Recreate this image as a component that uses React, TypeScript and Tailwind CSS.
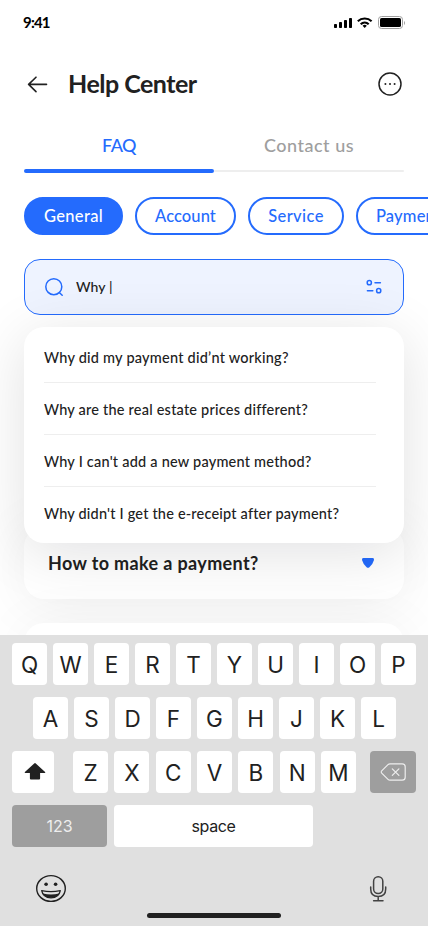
import React from 'react';

const lato = "font-['Lato','Noto_Sans',sans-serif]";

function Key({ label }: { label: string }) {
  return (
    <div className="flex h-[42px] w-[35px] items-center justify-center rounded-[4px] bg-white pt-[3px] text-[22.5px] leading-none text-[#212121]">
      {label}
    </div>
  );
}

function StatusBar() {
  return (
    <div className="flex h-11 items-center justify-between pl-[23px] pr-[23px]">
      <span className="text-[15px] font-bold leading-5 tracking-[-0.8px] text-black">9:41</span>
      <svg width="72" height="14" viewBox="333 16 72 14" className="translate-y-px">
        <rect x="334" y="24" width="3" height="4" rx="0.8" />
        <rect x="339" y="22" width="3" height="6" rx="0.8" />
        <rect x="344" y="20" width="3" height="8" rx="0.8" />
        <rect x="349" y="18" width="3" height="10" rx="0.8" />
        <g fill="none" stroke="#000" strokeWidth="2.1">
          <path d="M357.8 21.2a10 10 0 0 1 13.8 0" />
          <path d="M360.7 24.2a5.8 5.8 0 0 1 8 0" />
        </g>
        <path d="M362.6 25.8a3 3 0 0 1 4.2 0L364.7 28z" />
        <rect x="378.5" y="16.5" width="24" height="12" rx="3" fill="none" stroke="#a0a0a0" />
        <rect x="380" y="18" width="21" height="9" rx="1.6" />
        <path d="M404 21v4q1-.6 1-2t-1-2z" fill="#a0a0a0" />
      </svg>
    </div>
  );
}

function Header() {
  return (
    <div className="flex h-20 items-center px-6 text-[#212121]">
      <svg width="28" height="28" viewBox="24 70 28 28" fill="none" stroke="#212121" strokeWidth="1.6" strokeLinecap="round" strokeLinejoin="round">
        <path d="M46.5 84.4H28.6M36 77.2l-7.4 7.2 7.4 7.2" />
      </svg>
      <h1 className="ml-4 flex-1 whitespace-nowrap pb-[2px] text-[25px] font-bold leading-8 tracking-[-0.5px]">Help Center</h1>
      <svg width="28" height="28" viewBox="376 70 28 28" fill="none" stroke="#212121" strokeWidth="1.5">
        <circle cx="390" cy="84" r="11" />
        <path d="M385.4 84h.01M390 84h.01M394.6 84h.01" strokeWidth="2" strokeLinecap="round" />
      </svg>
    </div>
  );
}

function Tabs() {
  return (
    <div className="mx-6 mt-[10px] flex h-[39px] text-center text-[18px] font-medium leading-5">
      <div className="flex flex-1 flex-col justify-between">
        <span className="pt-px tracking-[-0.5px] text-[#246bfd]">FAQ</span>
        <div className="h-1 rounded-full bg-[#246bfd]" />
      </div>
      <div className="flex flex-1 flex-col justify-between">
        <span className="pt-px tracking-[0.5px] text-[#9e9e9e]">Contact us</span>
        <div className="mb-px h-[2px] rounded-full bg-[#eeeeee]" />
      </div>
    </div>
  );
}

function Chips() {
  const chip = 'flex shrink-0 items-center justify-center rounded-full border-2 border-[#246bfd] pt-px text-[16.5px] font-medium';
  return (
    <div className="mt-6 flex h-[38px] gap-3 overflow-hidden pl-6">
      <div className={chip + ' w-[99px] bg-[#246bfd] text-white tracking-[0.35px]'}>General</div>
      <div className={chip + ' w-[101px] text-[#246bfd] tracking-[0.1px]'}>Account</div>
      <div className={chip + ' w-[96px] text-[#246bfd] tracking-[0.4px]'}>Service</div>
      <div className={chip + ' w-[105px] text-[#246bfd] tracking-[0.2px]'}>Payment</div>
    </div>
  );
}

const suggestions = [
  { text: 'Why did my payment did’nt working?', spacing: 'tracking-[0.23px]' },
  { text: 'Why are the real estate prices different?', spacing: 'tracking-[0.21px]' },
  { text: "Why I can't add a new payment method?", spacing: 'tracking-[0.22px]' },
  { text: "Why didn't I get the e-receipt after payment?", spacing: 'tracking-[0.19px]' },
];

function Search() {
  return (
    <div className="relative mx-6 mt-6">
      <div className="flex h-14 items-center rounded-2xl border border-[#246bfd] bg-[#eef3ff] px-[19px]">
        <svg width="20" height="20" viewBox="44 277 20 20" fill="none" stroke="#246bfd" strokeWidth="1.5" strokeLinecap="round">
          <circle cx="53.8" cy="286.7" r="8" />
          <path d="M59.5 292.7l2.7 2.5" />
        </svg>
        <span className="ml-3 flex-1 text-[14px] font-medium leading-5 tracking-[0.1px] text-[#212121]">Why |</span>
        <svg width="20" height="20" viewBox="364 277 20 20" fill="none" stroke="#246bfd" strokeWidth="1.5" strokeLinecap="round">
          <circle cx="369.3" cy="282.7" r="2.1" />
          <path d="M375 282.7h5.4M367.4 290.7h5.4" />
          <circle cx="378.7" cy="290.7" r="2.1" />
        </svg>
      </div>
      <div className="absolute left-0 top-[68px] z-20 h-[216px] w-full rounded-[20px] bg-white pl-5 pr-7 pt-1 shadow-[0_10px_60px_rgba(4,6,15,0.12)]">
        {suggestions.map((s, i) => (
          <div key={s.text} className={'flex h-[52px] items-center whitespace-nowrap text-[14.5px] font-medium text-[#212121] ' + s.spacing + (i < 3 ? ' border-b border-[#eeeeee] pt-[2px]' : ' pt-px')}>
            {s.text}
          </div>
        ))}
      </div>
    </div>
  );
}

function Questions() {
  return (
    <div className="mx-6 mt-[212px] flex flex-col gap-6">
      <div className="flex h-[72px] items-center justify-between rounded-[20px] bg-white px-6 shadow-[0_4px_60px_rgba(4,6,15,0.07)]">
        <span className="text-[18px] font-bold leading-6 tracking-[0.36px] text-[#212121]">How to make a payment?</span>
        <svg width="24" height="24" viewBox="356 551 24 24">
          <path d="M363.4 558h9.2q1.8.1 1.4 2.1-1.2 4.4-4.6 7.2-1.4 1.1-2.8 0-3.4-2.8-4.6-7.2-.4-2 1.4-2.1z" fill="#246bfd" />
        </svg>
      </div>
      <div className="h-[72px] rounded-[20px] bg-white shadow-[0_4px_60px_rgba(4,6,15,0.05)]" />
    </div>
  );
}

function Keyboard() {
  return (
    <div className="absolute inset-x-0 bottom-0 z-30 h-[291px] bg-[#e0e0e0] px-3 pt-2 font-['Inter','Liberation_Sans',sans-serif]">
      <div className="flex justify-between">{'QWERTYUIOP'.split('').map((k) => <Key key={k} label={k} />)}</div>
      <div className="mt-3 flex justify-between pl-[21px] pr-5">{'ASDFGHJKL'.split('').map((k) => <Key key={k} label={k} />)}</div>
      <div className="mt-3 flex">
        <div className="flex h-[42px] w-[42px] items-center justify-center rounded-[4px] bg-white pl-[4px]">
          <svg width="22" height="18" viewBox="23 763 22 18" fill="#212121">
            <path d="M33.2 763.5q.8-.8 1.6 0l9.3 8.4q.6.8-.4 1.1h-4.6v5.5q0 1-1 1h-8.2q-1 0-1-1V773h-4.6q-1-.3-.4-1.1z" />
          </svg>
        </div>
        <div className="ml-[19px] flex w-[283px] justify-between">{'ZXCVBNM'.split('').map((k) => <Key key={k} label={k} />)}</div>
        <div className="ml-[14px] flex h-[42px] w-[46px] items-center justify-center rounded-[4px] bg-[#9e9e9e]">
          <svg width="28" height="20" viewBox="379 762 28 20" fill="none" stroke="#eeeeee" strokeWidth="1.2" strokeLinejoin="round" strokeLinecap="round">
            <path d="M390 763.8h12.2q3 0 3 3v10.4q0 3-3 3H390q-1.2 0-2-.8l-6.3-6.3q-1.1-1.1 0-2.2L388 764.6q.8-.8 2-.8zM392.3 768.8l6.6 6.6M398.9 768.8l-6.6 6.6" />
          </svg>
        </div>
      </div>
      <div className="mt-3 flex gap-[7px]">
        <div className="flex h-[42px] w-[95px] items-center justify-center rounded-[4px] bg-[#9e9e9e] text-[16px] text-[#eeeeee]">123</div>
        <div className="flex h-[42px] w-[199px] items-center justify-center rounded-[4px] bg-white text-[16px] tracking-[-0.35px] text-[#212121]">space</div>
      </div>
      <div className="mt-[25px] flex justify-between pl-[22px] pr-[24px]">
        <svg width="34" height="32" viewBox="34 872 34 32" fill="none" stroke="#212121" strokeWidth="1.4">
          <ellipse cx="51" cy="888.5" rx="14.3" ry="12.9" />
          <circle cx="46.1" cy="884.3" r="1.8" fill="#212121" stroke="none" />
          <circle cx="55.6" cy="884.3" r="1.8" fill="#212121" stroke="none" />
          <path d="M41.7 890.7q9.3 1.8 18.6 0-1.3 7.1-9.3 7.1t-9.3-7.1z" strokeWidth="1.3" strokeLinejoin="round" />
          <path d="M43 893.5q8 2.2 16 0-2 4.3-8 4.3t-8-4.3z" fill="#212121" stroke="none" />
        </svg>
        <svg width="28" height="32" viewBox="364 872 28 32" fill="none" stroke="#424242" strokeWidth="1.5" strokeLinecap="round">
          <rect x="373.6" y="876.7" width="9.2" height="16.8" rx="4.5" />
          <path d="M370.7 887v2q0 7.5 7.5 7.5t7.5-7.5v-2M378.2 896.5v4.2M373.6 900.7h9.4" />
        </svg>
      </div>
      <div className="mx-auto mt-[9px] h-[5px] w-[134px] rounded-full bg-[#212121]" />
    </div>
  );
}

export default function App() {
  return (
    <div className={'relative h-[926px] w-[428px] overflow-hidden bg-white ' + lato}>
      <StatusBar />
      <Header />
      <Tabs />
      <Chips />
      <Search />
      <Questions />
      <Keyboard />
    </div>
  );
}
